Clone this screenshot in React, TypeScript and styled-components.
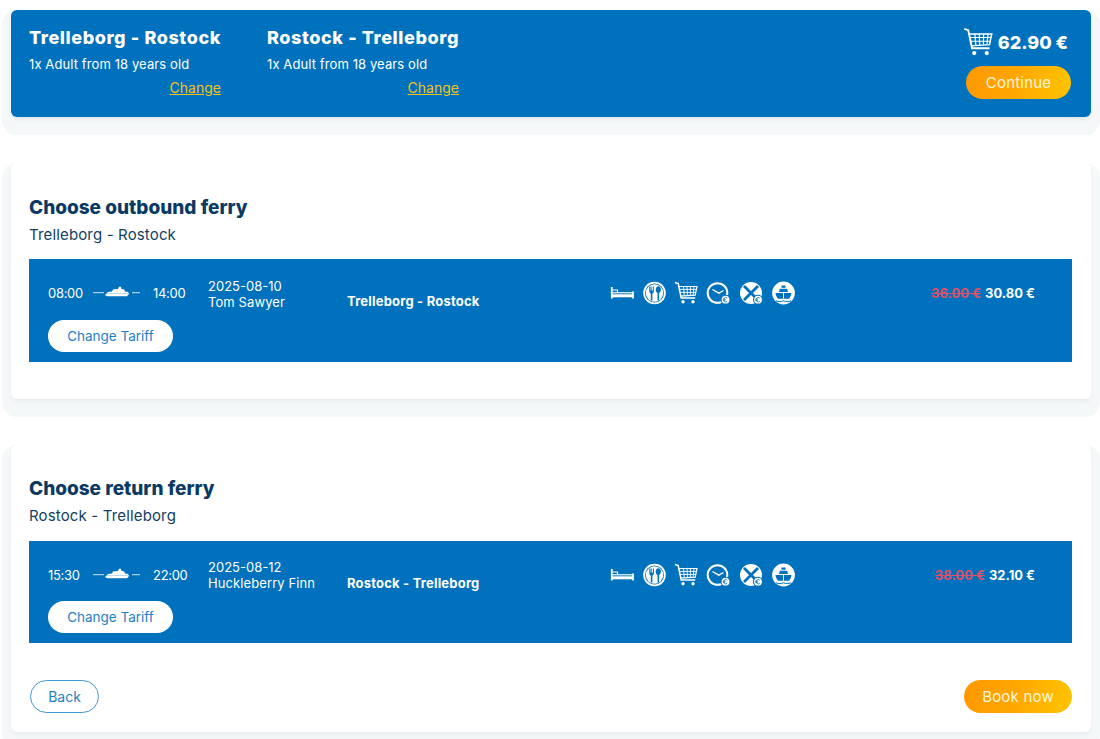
import React from "react";
import styled, { createGlobalStyle } from "styled-components";

const GlobalStyle = createGlobalStyle`
  html, body {
    margin: 0;
    padding: 0;
    background: #ffffff;
    font-family: "Inter", "Open Sans", sans-serif;
    color: #0a3a63;
  }
  * { box-sizing: border-box; }
`;

const BLUE = "#0071bc";
const ORANGE = "linear-gradient(100deg, #ff9800 0%, #ffa600 45%, #ffc400 100%)";

const Bed = () => (
  <svg width="24" height="24" viewBox="0 0 24 24" fill="none" stroke="#fff">
    <path d="M1.800 6v11.500" strokeWidth="1.800" />
    <path d="M23 10.500v7" strokeWidth="1.800" />
    <path d="M2 14.800h21" strokeWidth="3" />
    <path d="M2.500 9h5v3" strokeWidth="1.200" />
    <path d="M2.500 11.800h20.500" strokeWidth="1.200" />
  </svg>
);

const Dining = () => (
  <svg width="24" height="24" viewBox="0 0 24 24">
    <circle cx="12.500" cy="12" r="11.300" fill="#fff" />
    <circle cx="12.500" cy="12" r="9.500" fill={BLUE} />
    <circle cx="12.500" cy="12" r="8.700" fill="#fff" />
    <path d="M7.300 5.500v4.700c0 1.200.7 1.900 1.500 2.200v7h1.600v-7c.8-.3 1.500-1 1.500-2.200V5.500h-.9v4h-.8v-4h-.8v4h-.8v-4z" fill={BLUE} />
    <path d="M16.300 5.200c-1.600 0-2.600 1.700-2.600 3.600 0 1.500.7 2.700 1.800 3.100v7.500h1.600v-7.500c1.100-.4 1.800-1.600 1.800-3.100 0-1.900-1-3.600-2.600-3.600z" fill={BLUE} />
  </svg>
);

const Cart = ({ size = 24 }: { size?: number }) => (
  <svg width={size} height={size} viewBox="0 0 24 24" fill="none" stroke="#fff">
    <path d="M1 1.500l3.200 1 3 14.500h14" strokeWidth="1.500" />
    <path d="M5 5.500h18l-1.800 8.600-14.600 1" strokeWidth="1.200" />
    <path d="M9.500 5.500l.8 9.400M13 5.500l.4 9M16.500 5.500l-.2 8.600M20 5.500l-.8 8.400M5.600 8.400h16.800M6.200 11.400h15.600" strokeWidth=".9" />
    <circle cx="9" cy="20.800" r="1.700" fill="#fff" stroke="none" />
    <circle cx="19" cy="20.800" r="1.700" fill="#fff" stroke="none" />
  </svg>
);

const EuroBadge = ({ cx }: { cx: number }) => (
  <g transform={`translate(${cx} 18.700)`}>
    <circle r="5" fill={BLUE} />
    <circle r="3.900" fill="#fff" />
    <path d="M1.800-1.600a2.200 2.200 0 1 0 0 3.200M-2.700-.5h2.800M-2.700.6h2.600" fill="none" stroke={BLUE} strokeWidth=".8" />
  </g>
);

const Clock = () => (
  <svg width="24" height="24" viewBox="0 0 24 24" fill="none">
    <circle cx="11.500" cy="12" r="9.800" stroke="#fff" strokeWidth="2" />
    <path d="M6.500 8.500l6.300 3.700 4.700-2.700" stroke="#fff" strokeWidth="1.400" />
    <EuroBadge cx={19.500} />
  </svg>
);

const NoMeal = () => (
  <svg width="24" height="24" viewBox="0 0 24 24">
    <circle cx="13" cy="12" r="11" fill="#fff" />
    <path d="M6 5l14 14M20 5L6 19" stroke={BLUE} strokeWidth="2.800" />
    <EuroBadge cx={20} />
  </svg>
);

const ShipBadge = () => (
  <svg width="25" height="24" viewBox="0 0 25 24">
    <circle cx="13.500" cy="12" r="11.400" fill="#fff" />
    <path d="M5.500 12h16c-.3 2.400-1.200 4.300-2.500 5.800H8c-1.300-1.500-2.200-3.400-2.500-5.800z" fill={BLUE} />
    <path d="M9 11l.8-3.200h7.400L18 11z" fill={BLUE} />
    <path d="M11.500 6.800V4.500h4v2.300z" fill={BLUE} />
    <path d="M13 12v5.800h1V12z" fill="#fff" />
    <path d="M6 19.800c2.500 1 5 1 7.500 0 2.500 1 5 1 7.500 0" stroke={BLUE} strokeWidth="1" fill="none" />
  </svg>
);

const Crossing = () => (
  <svg width="47" height="14" viewBox="0 0 47 14" fill="none">
    <path d="M0 6.700h11M39 6.700h8" stroke="#cfe3f2" strokeWidth="1" />
    <path d="M12 9l3-3 4-.5 1-2 5-.5 1-2.200h2l.5 2.200 2.500.2 1 2.300 3 .5 1 2-2 2.300H14z" fill="#fff" />
    <path d="M14 7.500h21" stroke="#bcd9ee" strokeWidth="1" />
  </svg>
);

const Page = styled.div`
  display: flex;
  flex-direction: column;
  gap: 46px;
  padding: 10px 9px 7px 11px;
`;

const Card = styled.section`
  background: #ffffff;
  border-radius: 6px;
  padding: 29.500px 19px 37px 18px;
  box-shadow: 0 3px 5px -1px rgba(40, 70, 90, 0.08), 0 9px 0 9px #f5f8f9;
  &:last-child {
    padding-bottom: 19px;
  }
`;

const Summary = styled.header`
  display: flex;
  justify-content: space-between;
  height: 107px;
  padding: 15px 20px 18px 18px;
  background: ${BLUE};
  border-radius: 6px;
  color: #ffffff;
  box-shadow: 0 3px 5px -1px rgba(40, 70, 90, 0.1), 0 9px 0 9px #f5f8f9;
`;

const Trips = styled.div`
  display: flex;
  gap: 46px;
`;

const Trip = styled.div`
  display: flex;
  flex-direction: column;
  width: 192px;
`;

const TripTitle = styled.div`
  font-size: 18px;
  font-weight: 800;
  line-height: 26px;
  letter-spacing: 0.6px;
  white-space: nowrap;
`;

const TripInfo = styled.div`
  margin-top: 1px;
  font-size: 13px;
  line-height: 24px;
  letter-spacing: 0.1px;
  white-space: nowrap;
`;

const ChangeLink = styled.a`
  align-self: flex-end;
  margin-top: 1px;
  font-size: 14px;
  line-height: 22px;
  color: #f7c213;
  text-decoration: underline;
`;

const Checkout = styled.div`
  display: flex;
  flex-direction: column;
  align-items: flex-end;
`;

const Total = styled.div`
  display: flex;
  align-items: center;
  gap: 5px;
  height: 41px;
  padding: 0 3px 7px 0;
  font-size: 18px;
  font-weight: 800;
`;

const PillButton = styled.button<{ $tone: "orange" | "white" | "outline"; $width: number }>`
  width: ${(p) => p.$width}px;
  height: ${(p) => (p.$tone === "white" ? 32 : 33)}px;
  padding: 0;
  border-radius: 17px;
  font-family: inherit;
  font-size: ${(p) => (p.$tone === "orange" ? 15 : p.$tone === "white" ? 13.500 : 14)}px;
  letter-spacing: ${(p) => (p.$tone === "orange" ? 0.2 : 0)}px;
  border: ${(p) => (p.$tone === "outline" ? `1px solid #3f97d3` : "none")};
  background: ${(p) => (p.$tone === "orange" ? ORANGE : "#ffffff")};
  color: ${(p) => (p.$tone === "orange" ? "#fff6dc" : "#1f80c6")};
`;

const Heading = styled.h2`
  margin: 0;
  font-size: 19px;
  font-weight: 800;
  line-height: 30px;
  color: #0a3a63;
`;

const RouteName = styled.div`
  margin-bottom: 12.500px;
  font-size: 15px;
  line-height: 24px;
  letter-spacing: 0.15px;
  color: #123f63;
`;

const FerryRow = styled.div`
  display: grid;
  grid-template-columns: 160px 139px 263px auto 1fr;
  grid-template-rows: 32px 32px;
  row-gap: 10.500px;
  align-items: center;
  height: 102.500px;
  padding: 18px 37px 0 19px;
  background: ${BLUE};
  color: #ffffff;
  font-size: 13px;
`;

const Times = styled.div`
  display: grid;
  grid-template-columns: 45px 47px 13px auto;
  align-items: center;
  line-height: 16px;
  letter-spacing: -0.3px;
`;

const Spacer = styled.span``;

const DateCell = styled.div`
  padding-top: 1px;
  line-height: 16px;
  white-space: nowrap;
`;

const ShipName = styled.span`
  letter-spacing: 0.1px;
`;

const RouteCell = styled.div`
  align-self: end;
  font-weight: 700;
  line-height: 16px;
  letter-spacing: 0.2px;
  white-space: nowrap;
`;

const Amenities = styled.div`
  display: flex;
  gap: 8px;
`;

const Price = styled.div`
  justify-self: end;
  font-weight: 700;
  white-space: nowrap;
`;

const OldPrice = styled.span`
  margin-right: 4px;
  color: #d9516a;
  text-decoration: line-through;
`;

const TariffCell = styled.div`
  grid-column: 1 / -1;
  display: flex;
`;

const Footer = styled.div`
  display: flex;
  justify-content: space-between;
  margin-top: 37px;
  padding-left: 1px;
`;

type Ferry = {
  dep: string;
  arr: string;
  date: string;
  ship: string;
  route: string;
  oldPrice: string;
  price: string;
};

const FerryLine = ({ ferry }: { ferry: Ferry }) => (
  <FerryRow>
    <Times>
      <span>{ferry.dep}</span>
      <Crossing />
      <Spacer />
      <span>{ferry.arr}</span>
    </Times>
    <DateCell>
      {ferry.date}
      <br />
      <ShipName>{ferry.ship}</ShipName>
    </DateCell>
    <RouteCell>{ferry.route}</RouteCell>
    <Amenities>
      <Bed />
      <Dining />
      <Cart />
      <Clock />
      <NoMeal />
      <ShipBadge />
    </Amenities>
    <Price>
      <OldPrice>{ferry.oldPrice}</OldPrice>
      {ferry.price}
    </Price>
    <TariffCell>
      <PillButton $tone="white" $width={125}>Change Tariff</PillButton>
    </TariffCell>
  </FerryRow>
);

const App = () => {
  return (
    <Page>
      <GlobalStyle />
      <Summary>
        <Trips>
          <Trip>
            <TripTitle>Trelleborg - Rostock</TripTitle>
            <TripInfo>1x Adult from 18 years old</TripInfo>
            <ChangeLink>Change</ChangeLink>
          </Trip>
          <Trip>
            <TripTitle>Rostock - Trelleborg</TripTitle>
            <TripInfo>1x Adult from 18 years old</TripInfo>
            <ChangeLink>Change</ChangeLink>
          </Trip>
        </Trips>
        <Checkout>
          <Total>
            <Cart size={30} />
            62.90 €
          </Total>
          <PillButton $tone="orange" $width={105}>Continue</PillButton>
        </Checkout>
      </Summary>

      <Card>
        <Heading>Choose outbound ferry</Heading>
        <RouteName>Trelleborg - Rostock</RouteName>
        <FerryLine
          ferry={{
            dep: "08:00",
            arr: "14:00",
            date: "2025-08-10",
            ship: "Tom Sawyer",
            route: "Trelleborg - Rostock",
            oldPrice: "36.00 €",
            price: "30.80 €",
          }}
        />
      </Card>

      <Card>
        <Heading>Choose return ferry</Heading>
        <RouteName>Rostock - Trelleborg</RouteName>
        <FerryLine
          ferry={{
            dep: "15:30",
            arr: "22:00",
            date: "2025-08-12",
            ship: "Huckleberry Finn",
            route: "Rostock - Trelleborg",
            oldPrice: "38.00 €",
            price: "32.10 €",
          }}
        />
        <Footer>
          <PillButton $tone="outline" $width={69}>Back</PillButton>
          <PillButton $tone="orange" $width={108}>Book now</PillButton>
        </Footer>
      </Card>
    </Page>
  );
};

export default App;
